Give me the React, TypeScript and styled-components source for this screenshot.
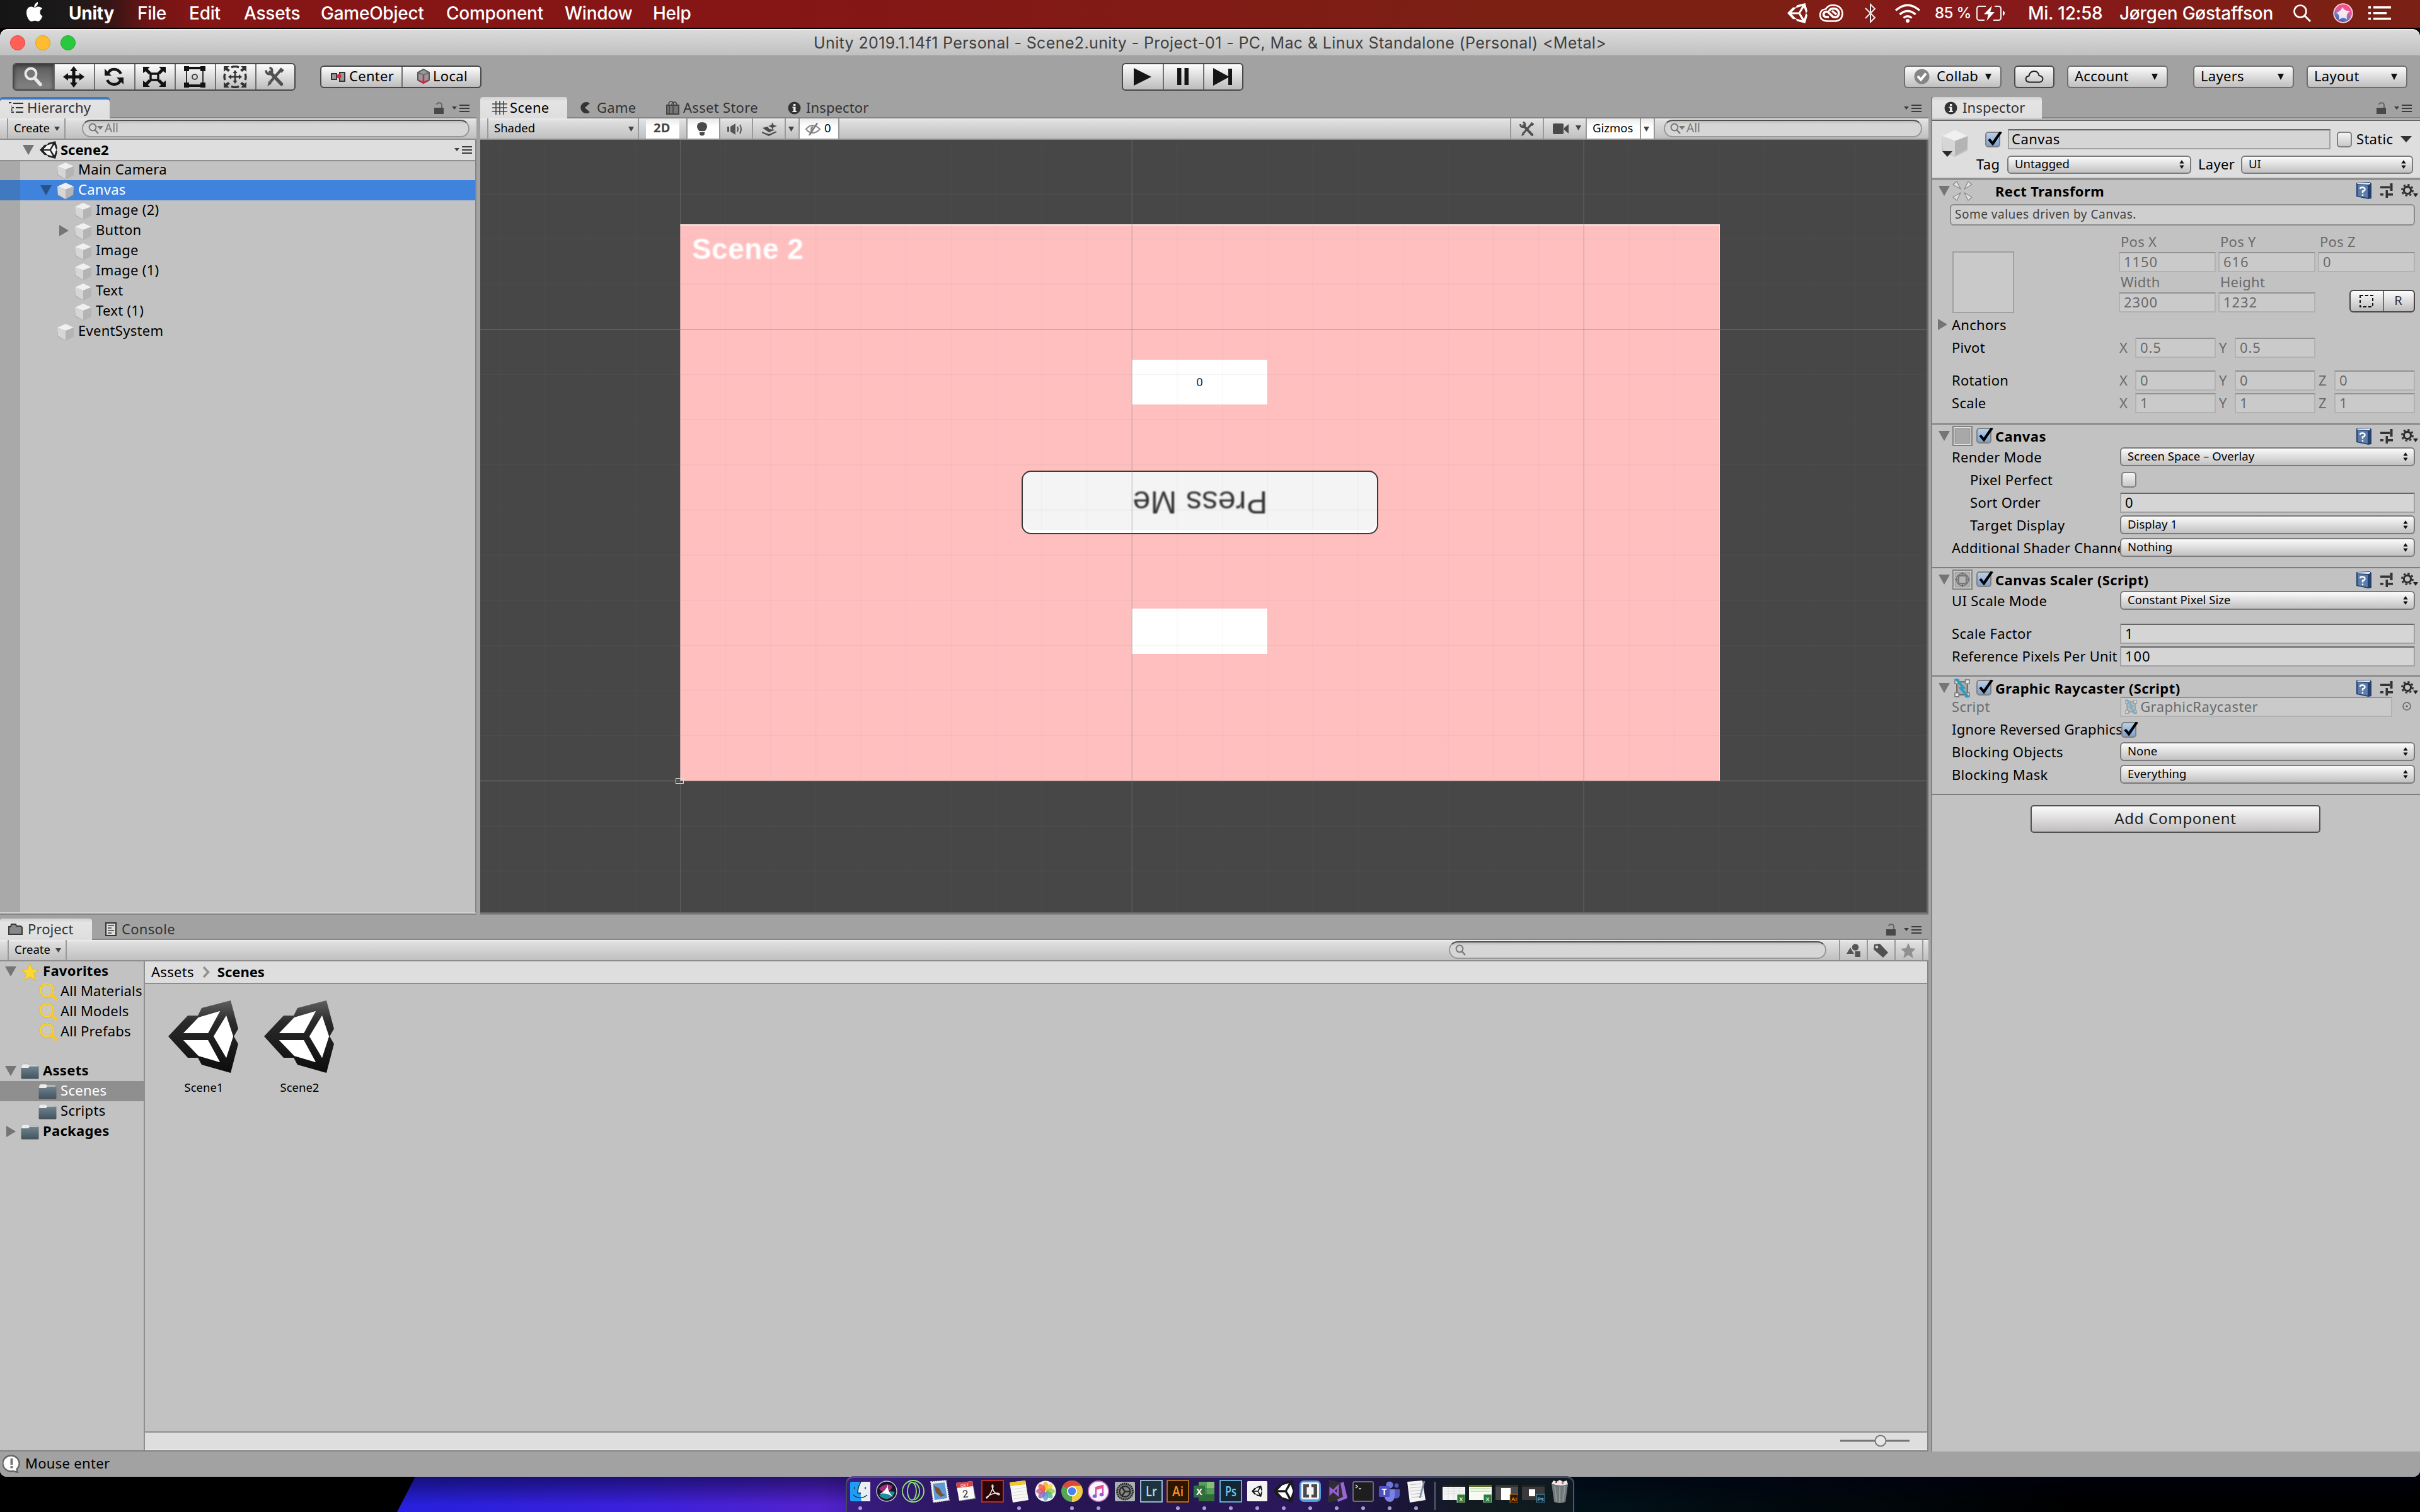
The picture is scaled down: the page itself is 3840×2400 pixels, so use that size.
import React from "react";
import styled, { createGlobalStyle, css } from "styled-components";

const UI = `"Noto Sans", "Open Sans", sans-serif`;
const MAC = `Inter, "Liberation Sans", sans-serif`;

const Global = createGlobalStyle`
  *, *::before, *::after { box-sizing: border-box; }
  html, body { margin: 0; padding: 0; background: #000; }
  body { width: 3840px; height: 2400px; overflow: hidden; font-family: ${UI}; font-size: 22px; color: #000; }
  svg { display: block; flex: none; }
`;

const Desktop = styled.div`
  width: 3840px; height: 2400px; display: flex; flex-direction: column; background: #000; overflow: hidden;
`;

/* ---------- text ---------- */
const Txt = styled.span<{ $b?: boolean; $s?: number; $c?: string; $ls?: number; $w?: number; $ml?: number; $up?: number }>`
  font-family: ${UI};
  font-size: ${p => p.$s ?? 22}px;
  font-weight: ${p => (p.$b ? 700 : 400)};
  letter-spacing: ${p => p.$ls ?? 0.3}px;
  color: ${p => p.$c ?? "#000"};
  line-height: 30px;
  padding-bottom: ${p => p.$up ?? 3}px;
  margin-left: ${p => p.$ml ?? 0}px;
  white-space: pre;
  flex: none;
  ${p => p.$w !== undefined && css`width: ${p.$w}px;`}
`;

/* ---------- menu bar ---------- */
const MenuBar = styled.header`
  height: 46px; flex: none; display: flex; align-items: center; padding: 0 46px 2px 42px;
  border-bottom: 2px solid #0a0000;
  background: linear-gradient(90deg, #151515 0, #1b1919 110px, #3a1515 180px, #721414 240px, #861616 320px, #861616 1200px, #7c2014 2400px, #7d2014 2800px, #861919 3050px, #861919 3300px, #7c2014 3700px, #7b2014 3840px);
`;
const MenuText = styled.span<{ $w: number; $bold?: boolean; $ml: number; $s?: number; $ls?: number }>`
  font-family: ${MAC}; color: #fff; font-size: ${p => p.$s ?? 28}px; line-height: 44px; white-space: pre;
  font-weight: ${p => (p.$bold ? 700 : 500)};
  letter-spacing: ${p => p.$ls ?? -0.25}px;
  width: ${p => p.$w}px; margin-left: ${p => p.$ml}px; flex: none;
`;
const MenuRight = styled.div`display: flex; align-items: center; margin-left: auto;`;
const Slot = styled.div<{ $ml?: number; $w?: number; $mt?: number }>`
  display: flex; flex: none; margin-left: ${p => p.$ml ?? 0}px; margin-top: ${p => p.$mt ?? 0}px;
  ${p => p.$w !== undefined && css`width: ${p.$w}px;`}
`;

/* ---------- window ---------- */
const TitleBar = styled.div`
  height: 43px; flex: none; display: flex; align-items: center; justify-content: center; padding-left: 16px;
  background: linear-gradient(#dadada, #c1c1c1); border-bottom: 2px solid #aaa; border-top: 2px solid #f0f0f0;
  border-radius: 12px 12px 0 0;
`;
const Lights = styled.div`display: flex; gap: 16px; width: 1275px; flex: none;`;
const Light = styled.i<{ $c: string; $e: string }>`
  width: 24px; height: 24px; border-radius: 50%; background: ${p => p.$c}; border: 1px solid ${p => p.$e};
`;
const Title = styled.span`
  font-family: ${MAC}; font-size: 25px; letter-spacing: 0.38px; color: #404040; line-height: 40px; white-space: pre; flex: 1; padding-top: 1px;
`;
const Window = styled.div`height: 2298px; flex: none; display: flex; flex-direction: column; background: #a2a2a2; border-radius: 12px 12px 10px 10px; overflow: hidden;`;

const MainBar = styled.div`height: 65px; flex: none; display: flex; align-items: center; padding: 0 20px;`;
const BarZone = styled.div<{ $w?: number; $right?: boolean }>`
  display: flex; align-items: center;
  ${p => p.$w && css`width: ${p.$w}px;`}
  ${p => p.$right && css`margin-left: auto;`}
`;
const Group = styled.div<{ $h: number; $ml?: number }>`
  display: flex; height: ${p => p.$h}px; margin-left: ${p => p.$ml ?? 0}px; overflow: hidden;
  border: 2px solid #484848; border-radius: 6px; background: linear-gradient(#fdfdfd, #bdbbbc);
`;
const Cell = styled.div<{ $w: number; $on?: boolean; $pl?: number }>`
  width: ${p => p.$w}px; display: flex; align-items: center; ${p => (p.$pl !== undefined ? `padding-left:${p.$pl}px;` : "justify-content:center; padding-right:2px;")}
  border-left: 2px solid #6e6e6e; flex: none;
  &:first-child { border-left: 0; }
  ${p => p.$on && css`background: linear-gradient(#5a5a5a, #868686); box-shadow: inset 0 2px 6px #333;`}
`;
const PushButton = styled.div<{ $w: number; $ml?: number; $strong?: boolean; $center?: boolean }>`
  width: ${p => p.$w}px; height: 36px; margin-left: ${p => p.$ml ?? 20}px; display: flex; align-items: center; flex: none;
  padding: 0 ${p => (p.$center ? 0 : 14)}px 0 ${p => (p.$center ? 0 : 10)}px;
  justify-content: ${p => (p.$center ? "center" : "space-between")};
  border: 2px solid ${p => (p.$strong ? "#484848" : "#6e6e6e")}; border-radius: 6px; background: linear-gradient(#fbfbfb, #c0bebf);
`;

const Main = styled.div`display: flex; height: 2150px; flex: none;`;
const LeftArea = styled.div`width: 3060px; display: flex; flex-direction: column; flex: none;`;
const TopRow = styled.div`display: flex; height: 1298px; flex: none; gap: 6px;`;
const Panel = styled.section<{ $w: number; $h?: string }>`
  width: ${p => p.$w}px; flex: none; display: flex; flex-direction: column; height: ${p => p.$h ?? "100%"};
  border-bottom: 2px solid #848484;
`;
const TabStrip = styled.div<{ $h?: number }>`
  height: ${p => p.$h ?? 34}px; flex: none; display: flex; align-items: flex-end; border-bottom: 2px solid #858585;
`;
const Tab = styled.div<{ $w: number; $on?: boolean; $focus?: boolean; $pl: number }>`
  width: ${p => p.$w}px; height: 34px; margin-bottom: -2px; padding-left: ${p => p.$pl}px; flex: none;
  display: flex; align-items: center; border-radius: 4px 4px 0 0;
  ${p => p.$on && css`background: linear-gradient(#d2d2d2, #e4e4e4 20%, #dedede);`}
  ${p => p.$focus && css`box-shadow: inset 0 4px 0 #3d78c2;`}
`;
const StripEnd = styled.div<{ $r: number }>`margin-left: auto; display: flex; gap: 13px; align-items: center; height: 34px; margin-bottom: -2px; padding: 1px ${p => p.$r}px 0 0;`;
const Bar = styled.div<{ $pl?: number }>`
  height: 34px; flex: none; display: flex; align-items: stretch; padding-left: ${p => p.$pl ?? 11}px;
  background: linear-gradient(#eee, #dedede 4px, #c0c0c0); border-bottom: 2px solid #8e8e8e;
`;
const BarItem = styled.div<{ $w: number; $on?: boolean; $pl?: number; $noL?: boolean; $last?: boolean }>`
  width: ${p => p.$w}px; flex: none; display: flex; align-items: center; padding-left: ${p => p.$pl ?? 0}px;
  border-left: ${p => (p.$noL ? 0 : 2)}px solid #999; padding-top: 1px;
  ${p => p.$last && css`border-right: 2px solid #999;`}
  ${p => p.$on && css`background: linear-gradient(#e9e9e9, #fff 40%);`}
`;
const Push = styled.div`margin-left: auto; display: flex;`;
const Search = styled.div<{ $w: number; $ml: number }>`
  width: ${p => p.$w}px; height: 28px; margin: 2px 0 0 ${p => p.$ml}px; flex: none; display: flex; align-items: center; padding-left: 8px;
  border: 2px solid #989898; border-top-color: #505050; border-radius: 14px; background: linear-gradient(#bcbcbc, #d6d6d6 5px);
`;

/* ---------- trees ---------- */
const HierBody = styled.div`
  flex: 1; display: flex; flex-direction: column; border-right: 2px solid #848484; border-bottom: 2px solid #d2d2d2;
  background: linear-gradient(90deg, #a9a9a9 32px, #c2c2c2 32px);
`;
const SceneRow = styled.div`
  height: 34px; flex: none; background: #dedede; border-bottom: 2px solid #909090; display: flex; align-items: center; padding: 0 5px 0 36px;
`;
const TreeRow = styled.div<{ $pl: number; $bg?: string; $mt?: number }>`
  height: 32px; margin-top: ${p => p.$mt ?? 0}px; flex: none; display: flex; align-items: center; padding-left: ${p => p.$pl}px; overflow: hidden;
  background: ${p => p.$bg ?? "transparent"};
`;

/* ---------- scene view ---------- */
const SceneView = styled.div`
  flex: 1; position: relative; overflow: hidden; background: #474747; border-right: 3px solid #686868; border-bottom: 2px solid #686868;
`;
const CanvasObj = styled.div<{ $x: number; $y: number; $w: number; $h: number }>`
  position: absolute; left: ${p => p.$x}px; top: ${p => p.$y}px; width: ${p => p.$w}px; height: ${p => p.$h}px;
  display: flex; align-items: center; justify-content: center;
`;
const PinkCanvas = styled(CanvasObj)`background: #ffbfbf; border-top: 2px solid #ffe4e4; border-right: 1px solid #ffe4e4;`;
const SceneLabel = styled(CanvasObj)`
  justify-content: flex-start; font: 700 46px/52px "Liberation Sans", Arial, sans-serif; letter-spacing: 0.5px; color: #fff; filter: blur(0.8px); white-space: pre;
`;
const WhiteBox = styled(CanvasObj)`background: #fff; font: 18px/20px "Liberation Sans", Arial, sans-serif; color: #222; padding-top: 1px;`;
const PressButton = styled(CanvasObj)`
  background: #f4f4f4; border: 2px solid #3a3a3a; border-radius: 15px; box-shadow: inset 0 -5px 0 #fff;
  font: 50px/58px "Liberation Sans", Arial, sans-serif; color: #333;
  span { transform: rotate(180deg); filter: blur(0.9px); white-space: pre; letter-spacing: 0.4px; padding-top: 2px; }
`;
const GridSvg = styled.svg`position: absolute; left: 0; top: 0;`;

/* ---------- project ---------- */
const ProjectBody = styled.div`flex: 1; display: flex; min-height: 0; border-right: 2px solid #848484;`;
const Folders = styled.div`width: 230px; flex: none; background: #c2c2c2; border-right: 2px solid #8e8e8e; display: flex; flex-direction: column;`;
const Assets = styled.div`flex: 1; background: #c2c2c2; display: flex; flex-direction: column;`;
const Crumbs = styled.div`height: 36px; background: #dedede; border-bottom: 2px solid #8e8e8e; display: flex; align-items: center; padding-left: 10px; flex: none;`;
const Thumbs = styled.div`flex: 1; display: flex; padding: 26px 0 0 16px;`;
const Thumb = styled.figure`width: 152px; margin: 0; display: flex; flex-direction: column; align-items: center;`;
const ThumbName = styled.figcaption`margin: 8px 0 0 3px; display: flex;`;
const ZoomBar = styled.div`height: 30px; flex: none; background: #dedede; border-top: 2px solid #8e8e8e; border-bottom: 2px solid #e8e8e8; display: flex; align-items: center; justify-content: flex-end; padding-right: 28px;`;
const StatusBar = styled.footer`height: 40px; flex: none; display: flex; align-items: center; padding-left: 4px; background: #a2a2a2; border-bottom: 1px solid #b4b4b4;`;

/* ---------- inspector ---------- */
const Inspector = styled.section`width: 774px; margin-left: 6px; background: #c2c2c2; display: flex; flex-direction: column; box-shadow: -2px 0 0 #848484;`;
const InspTabs = styled(TabStrip)`background: #a2a2a2;`;
const ObjHead = styled.div`
  height: 96px; flex: none; border-top: 2px solid #666; margin-top: 2px; border-bottom: 4px solid #929292; background: #dedede; display: flex; padding: 13px 10px 0 14px;
`;
const BigCube = styled.div`
  width: 46px; flex: none; position: relative;
  &::after { content: ""; position: absolute; left: 2px; top: 35px; border: 8px solid transparent; border-top: 9px solid #2a2a2a; border-bottom: 0; }
`;
const ObjLines = styled.div`display: flex; flex-direction: column; flex: 1;`;
const Line = styled.div<{ $h: number; $pl?: number; $mt?: number }>`height: ${p => p.$h}px; margin-top: ${p => p.$mt ?? 0}px; display: flex; align-items: center; padding-left: ${p => p.$pl ?? 0}px; flex: none;`;
const Field = styled.div<{ $w: number; $ml?: number; $dim?: boolean }>`
  width: ${p => p.$w}px; height: 32px; margin-left: ${p => p.$ml ?? 0}px; display: flex; align-items: center; padding-left: 6px; flex: none;
  background: ${p => (p.$dim ? "#cacaca" : "#d5d5d5")};
  border: 2px solid ${p => (p.$dim ? "#b2b2b2" : "#a2a2a2")}; border-top-color: ${p => (p.$dim ? "#929292" : "#666")};
`;
const Select = styled.div<{ $w: number; $ml?: number; $h?: number }>`
  width: ${p => p.$w}px; height: ${p => p.$h ?? 30}px; margin-left: ${p => p.$ml ?? 0}px; display: flex; align-items: center; justify-content: space-between; flex: none;
  padding: 0 9px 0 10px; border: 2px solid #7a7a7a; border-radius: 6px; background: linear-gradient(#fbfbfb, #c2c0c1);
`;
const Check = styled.div<{ $on?: boolean; $ml?: number }>`
  width: 24px; height: 25px; margin-left: ${p => p.$ml ?? 0}px; flex: none; border: 2px solid #808080; border-radius: 5px;
  background: ${p => (p.$on ? "linear-gradient(#b9cfe8, #7d9fce)" : "linear-gradient(#f4f4f4, #c8c8c8)")};
`;
const Section = styled.div<{ $h: number; $first?: boolean }>`
  height: ${p => p.$h}px; flex: none; display: flex; flex-direction: column; border-top: ${p => (p.$first ? 0 : 2)}px solid #7e7e7e;
`;
const SecHead = styled.div<{ $h?: number }>`height: ${p => p.$h ?? 36}px; flex: none; display: flex; align-items: center; padding: 0 0 0 10px;`;
const HeadInner = styled.div<{ $h: number }>`height: ${p => p.$h}px; display: flex; align-items: center; flex: 1; align-self: flex-start;`;
const HeadTools = styled.div`margin-left: auto; display: flex; align-items: center; gap: 13px; padding-right: 3px;`;
const Row = styled.div<{ $mb?: number; $pl?: number }>`
  height: 32px; margin-bottom: ${p => p.$mb ?? 4}px; padding-left: ${p => p.$pl ?? 31}px; flex: none; display: flex; align-items: flex-start;
`;
const HelpBox = styled.div`
  height: 34px; margin: 2px 8px 10px 28px; border: 2px solid #8c8c8c; border-radius: 6px; background: #cfcfcf; display: flex; align-items: center; padding-left: 6px; flex: none;
`;
const RectGrid = styled.div`display: flex; padding-left: 32px; height: 132px; flex: none;`;
const AnchorBox = styled.div`width: 98px; height: 98px; margin-top: 31px; background: #c9c9c9; border: 2px solid #a0a0a0;`;
const FieldGrid = styled.div`margin-left: 166px; display: grid; grid-template-columns: repeat(3, 154px); column-gap: 4px; grid-auto-rows: 32px; align-items: start;`;
const Axis = styled.div`width: 158px; display: flex; flex: none;`;
const AddRow = styled.div`border-top: 2px solid #7e7e7e; padding-top: 16px; display: flex; justify-content: center; padding-right: 2px;`;
const AddButton = styled.div`
  width: 460px; height: 44px; border: 2px solid #505050; border-radius: 5px; background: linear-gradient(#fbfbfb, #bfbdbe); display: flex; align-items: center; justify-content: center;
`;

/* ---------- dock ---------- */
const Wallpaper = styled.div`
  height: 56px; flex: none; display: flex; padding-left: 1342px; position: relative;
  &::before {
    content: ""; position: absolute; left: 630px; top: 0; right: 0; bottom: 0;
    clip-path: polygon(29px 0, 100% 0, 100% 100%, 0 100%);
    background: linear-gradient(rgba(0,0,20,.5), rgba(0,0,20,0) 80%),
      linear-gradient(90deg, #2620dc 0, #3a20dc 370px, #5222cc 670px, #2c148a 870px, #1a0c50 1570px, #02141c 1790px, #010c12 2070px, #000 2670px);
  }
`;
const Dock = styled.div`
  width: 1156px; height: 60px; margin-top: -1px; border: 2px solid rgba(120,120,150,.5); border-top-width: 3px; border-radius: 12px 12px 0 0; display: flex; position: relative;
  background: linear-gradient(90deg, #3a1c84, #2c1760 14%, #25154f 40%, #2a185c 62%, #1a1538 76%, #111b20 86%, #0e1a20);
`;
const DockItem = styled.div`width: 42px; display: flex; flex-direction: column; align-items: center; padding-top: 3px; flex: none; gap: 6px;`;
const Dot = styled.i`width: 6px; height: 6px; border-radius: 50%; background: #a99bd8;`;
const DockSep = styled.div`width: 18px; display: flex; justify-content: center; padding-top: 6px; flex: none; &::after { content: ""; width: 2px; height: 45px; background: #5a6070; }`;

/* ---------- icons ---------- */
const CubeLogo = ({ w, h, o, i, grad }: { w: number; h: number; o: string; i: string; grad?: boolean }) => (
  <svg width={w} height={h} viewBox="0 0 111 115" preserveAspectRatio="none">
    {grad && <defs><linearGradient id="ug" x1="0" y1="0" x2="0" y2="1"><stop offset="0" stopColor="#606060" /><stop offset=".3" stopColor="#2a2a2a" /><stop offset="1" stopColor="#0c0c0c" /></linearGradient></defs>}
    <path fillRule="evenodd" fill={grad ? "url(#ug)" : o} d="M0 57L31 24H47L53 12L99 0L111 45L104 57L111 69L99 115L53 102L47 91H31ZM24 52H63L82 17L48 27ZM24 63L48 88L82 98L63 63ZM92 24L72 57L92 91L103 57Z" />
    {i !== "none" && <path fill={i} d="M24 52H63L82 17L48 27ZM24 63L48 88L82 98L63 63ZM92 24L72 57L92 91L103 57Z" />}
  </svg>
);
const Fold = ({ open, c = "#757575" }: { open?: boolean; c?: string }) => (
  <svg width="18" height="18" viewBox="0 0 18 18"><path fill={c} d={open ? "M0 1H18L9 17Z" : "M2 0L17 9L2 18Z"} /></svg>
);
const Down = ({ w = 10, h = 10, c = "#111" }: { w?: number; h?: number; c?: string }) => (
  <svg width={w} height={h} viewBox="0 0 10 10" preserveAspectRatio="none"><path fill={c} d="M0 0H10L5 10Z" /></svg>
);
const UpDown = () => <svg width="8" height="16" viewBox="0 0 8 16"><path d="M4 1L7.6 6.500H.4ZM4 15L.4 9.500H7.6Z" fill="#111" /></svg>;
const GameCube = ({ s = 28 }: { s?: number }) => (
  <svg width={s} height={s} viewBox="0 0 28 28">
    <path d="M14 1L27 7V21L14 27.5L1 21V7Z" fill="#999" opacity=".35" transform="translate(0 .6)" />
    <path d="M14 1L27 7L14 12L1 7Z" fill="#f0f0f0" /><path d="M1 7L14 12V27L2 20Z" fill="#d6d6d6" /><path d="M27 7L14 12V27L26 20Z" fill="#b4b4b4" />
  </svg>
);
const Lock = () => <svg width="15" height="19" viewBox="0 0 15 19"><path d="M0 9H15V19H0Z" fill="#484848" /><path d="M4 4Q4 1.2 8 1.2Q12 1.2 12 5V9" fill="none" stroke="#666" strokeWidth="2" /></svg>;
const PaneMenu = () => <svg width="28" height="12" viewBox="0 0 28 12"><path d="M0 3H8L4 8ZM12 0H28V2H12ZM12 5H28V7H12ZM12 10H28V12H12Z" fill="#3c3c3c" /></svg>;
const ListIcon = () => <svg width="23" height="18" viewBox="0 0 23 18"><path d="M0 0H4V2H0ZM7 1H23V3H7ZM4 4V16H6M4 8H8V10H4ZM11 8H23V10H11ZM4 15H8V17H4ZM11 15H23V17H11Z" fill="#333" /></svg>;
const Hash = () => <svg width="24" height="22" viewBox="0 0 24 22"><path d="M6 0V22M12 0V22M18 0V22M0 5H24M0 11H24M0 17H24" stroke="#444" strokeWidth="1.6" /></svg>;
const Pac = () => <svg width="18" height="18" viewBox="0 0 18 18"><path d="M16 2A9 9 0 1 0 16 16L8 9Z" fill="#333" /></svg>;
const Bag = () => <svg width="21" height="22" viewBox="0 0 21 22"><path d="M1 7H20V21H1Z" fill="#777" stroke="#444" strokeWidth="2" /><path d="M4 7Q4 1 8 1Q12 1 12 7M9 7Q9 2 13 2Q17 2 17 7M11 8V21M5 8V21" fill="none" stroke="#444" strokeWidth="1.6" /></svg>;
const Info = () => <svg width="21" height="21" viewBox="0 0 21 21"><circle cx="10.5" cy="10.5" r="10" fill="#333" /><path d="M9 4H12.4V7H9ZM7.5 8.5H12.5V15H14V17H7.5V15H9V10.5H7.5Z" fill="#eee" /></svg>;
const Mag = ({ c = "#777", s = 20, arrow = true }: { c?: string; s?: number; arrow?: boolean }) => (
  <svg width={s + (arrow ? 6 : 0)} height={s} viewBox={`0 0 ${arrow ? 26 : 20} 20`}><circle cx="7" cy="8" r="5.4" fill="none" stroke={c} strokeWidth="2" /><path d="M10.5 12L16 18" stroke={c} strokeWidth="2.4" />{arrow && <path d="M14 6H24L19 12Z" fill={c} />}</svg>
);
const Wrench = ({ s = 34, c = "#505050" }: { s?: number; c?: string }) => (
  <svg width={s} height={s} viewBox="0 0 32 32"><g fill="none" stroke={c}><path d="M9 9L26 27" strokeWidth="5" strokeLinecap="round" /><path d="M3 6Q3 12 8 12Q12 12 12 7Q12 3 8 2.5" strokeWidth="3.4" /><path d="M24 7L9 24" strokeWidth="4" /></g><path d="M25 2L30 6L26 10L22 6ZM5 30L7 22L11 26Z" fill={c} /></svg>
);
const Hand = () => <svg width="34" height="34" viewBox="0 0 34 34"><circle cx="13" cy="12" r="8.5" fill="#777" stroke="#e8e8e8" strokeWidth="4" /><path d="M19 19L28 29" stroke="#e8e8e8" strokeWidth="5.5" strokeLinecap="round" /></svg>;
const Move = () => <svg width="34" height="34" viewBox="0 0 34 34"><path d="M17 0L23 8H19.5V14.5H26V11L34 17L26 23V19.5H19.5V26H23L17 34L11 26H14.5V19.5H8V23L0 17L8 11V14.5H14.5V8H11Z" fill="#111" /></svg>;
const Rotate = () => <svg width="34" height="32" viewBox="0 0 34 32"><g fill="none" stroke="#151515" strokeWidth="4.400"><path d="M7 11Q10 4 17 4Q24 4 28 11" /><path d="M6 21Q10 28 17 28Q25 28 28 20" /></g><path d="M2 3V14H13ZM32 28V17H21Z" fill="#151515" /></svg>;
const Scale = () => <svg width="36" height="32" viewBox="0 0 36 32"><path d="M12 11H24V21H12Z" fill="none" stroke="#111" strokeWidth="3.4" /><path d="M0 0H11L7.500 3.500L13 9L9 12L4 7L0 10ZM36 0H25L28.500 3.500L23 9L27 12L32 7L36 10ZM0 32H11L7.500 28.500L13 23L9 20L4 25L0 22ZM36 32H25L28.500 28.500L23 23L27 20L32 25L36 22Z" fill="#111" /></svg>;
const RectTool = () => <svg width="34" height="34" viewBox="0 0 34 34"><path d="M4 4H30V30H4Z" fill="none" stroke="#333" strokeWidth="2" /><path d="M0 0H8V8H0ZM26 0H34V8H26ZM0 26H8V34H0ZM26 26H34V34H26ZM8 1H26V5H8ZM8 29H26V33H8Z" fill="#111" /><circle cx="17" cy="17" r="4" fill="none" stroke="#444" strokeWidth="2" /></svg>;
const Multi = () => <svg width="38" height="36" viewBox="0 0 38 36"><g fill="none" stroke="#333" strokeWidth="3.4"><path d="M13 3Q19 0 25 3M13 33Q19 36 25 33M3 13Q1 18 3 23M35 13Q37 18 35 23" /></g><path d="M1 1H10L7 4L11 7L8 10L4 7L1 10ZM37 1H28L31 4L27 7L30 10L34 7L37 10ZM1 35H10L7 32L11 29L8 26L4 29L1 26ZM37 35H28L31 32L27 29L30 26L34 29L37 26Z" fill="#333" /><path d="M19 7L22.500 12H20.300V16.700H25V14L30 18L25 22V19.300H20.300V24H22.500L19 29L15.500 24H17.700V19.300H13V22L8 18L13 14V16.700H17.700V12H15.500Z" fill="#333" /></svg>;
const PivotIcon = () => <svg width="24" height="16" viewBox="0 0 24 16"><path d="M1 3H9V12H1ZM14 1H22V15H14Z" fill="#999" stroke="#333" strokeWidth="2" /><circle cx="13" cy="7" r="3.6" fill="#d8283c" /></svg>;
const LocalIcon = () => <svg width="22" height="25" viewBox="0 0 22 25"><path d="M2 6L11 1L20 6V18L11 23L2 18Z" fill="#999" stroke="#555" strokeWidth="2" /><path d="M2 6L11 10L20 6M11 10V14" stroke="#666" strokeWidth="1.600" fill="none" /><path d="M11 11V22M4 19L11 22L18 19" stroke="#d02840" strokeWidth="2.600" fill="none" /></svg>;
const PlayIcon = () => <svg width="30" height="28" viewBox="0 0 30 28"><path d="M1 0L29 14L1 28Z" fill="#151515" /></svg>;
const PauseIcon = () => <svg width="18" height="27" viewBox="0 0 18 27"><path d="M0 0H6.500V27H0ZM11.500 0H18V27H11.500Z" fill="#151515" /></svg>;
const StepIcon = () => <svg width="31" height="28" viewBox="0 0 31 28"><path d="M0 0L24 13V1H30V27H24V15L0 28Z" fill="#151515" /></svg>;
const CollabCheck = () => <svg width="25" height="25" viewBox="0 0 25 25"><circle cx="12.500" cy="12.500" r="12" fill="#858585" /><path d="M6 12L11 17.500L19 7.500" fill="none" stroke="#fff" strokeWidth="4" /></svg>;
const Cloud = () => <svg width="30" height="21" viewBox="0 0 30 21"><path d="M7 19.500Q1.500 19 1.500 14Q2 10 6.500 9.500Q8 2 15 2Q21 2 22.500 9Q28.500 10 28.500 14.500Q28 19 23 19.500Z" fill="none" stroke="#222" strokeWidth="2" /></svg>;
const Bulb = () => <svg width="16" height="22" viewBox="0 0 16 22"><path d="M8 0Q16 0 16 7Q16 10 12.500 14H3.500Q0 10 0 7Q0 0 8 0ZM4 15.500H12V18Q12 21 8 21.500Q4 21 4 18Z" fill="#4a4a4a" /></svg>;
const Speaker = () => <svg width="26" height="20" viewBox="0 0 26 20"><path d="M0 6H3V14H0ZM5 6L13 1V19L5 14Z" fill="#555" /><path d="M16 6Q18 10 16 14M20 3Q24 10 20 17" fill="none" stroke="#555" strokeWidth="2" /></svg>;
const Fx = () => <svg width="26" height="22" viewBox="0 0 26 22"><path d="M18 0L19.500 4.500L25 6L19.500 8L18 12L16 8L11 6L16 4.500ZM2 9L10 7L13 11L22 12L12 16ZM1 15L12 19L24 14V16L12 22L1 17Z" fill="#4a4a4a" /></svg>;
const EyeOff = () => <svg width="24" height="20" viewBox="0 0 24 20"><path d="M1 10Q11 -2 23 10Q11 22 1 10Z" fill="none" stroke="#888" strokeWidth="2" /><path d="M8 10Q8 5 13 5L9 15Q8 13 8 10Z" fill="#888" /><path d="M19 0L6 20" stroke="#777" strokeWidth="2.400" /></svg>;
const Camera = () => <svg width="26" height="17" viewBox="0 0 26 17"><rect width="17" height="17" rx="2" fill="#4a4a4a" /><path d="M18 7L25 1V16L18 10Z" fill="#4a4a4a" /></svg>;
const FolderTab = () => <svg width="23" height="18" viewBox="0 0 23 18"><path d="M1 5H4L5 1H12L13 4H20L22 6V17H1Z" fill="#888" stroke="#3a3a3a" strokeWidth="2" /></svg>;
const ConsoleIcon = () => <svg width="18" height="22" viewBox="0 0 18 22"><path d="M1 1H17V21H1Z" fill="#ddd" stroke="#333" strokeWidth="2" /><path d="M4 5H14M4 9H10M4 13H14M4 17H10" stroke="#666" strokeWidth="1.800" /></svg>;
const Star = ({ s = 29, c = "#fdd835" }: { s?: number; c?: string }) => <svg width={s} height={s} viewBox="0 0 28 28"><path d="M14 1L17.800 10L27 10.800L20 17L22.300 27L14 21.500L5.700 27L8 17L1 10.800L10.200 10Z" fill={c} stroke={s > 25 ? "#e2b92c" : c} /></svg>;
const YellowMag = () => <svg width="29" height="28" viewBox="0 0 29 28"><circle cx="12.500" cy="11.500" r="10.300" fill="#e6dcae" fillOpacity=".25" stroke="#dcae1c" strokeWidth="3.200" /><circle cx="12.500" cy="11.500" r="10.300" fill="none" stroke="#fed83a" strokeWidth="2" /><path d="M20 19L26.500 26" stroke="#f8c828" strokeWidth="4.600" strokeLinecap="round" /></svg>;
const Folder = () => <svg width="29" height="25" viewBox="0 0 29 25"><defs><linearGradient id="fo" x1="0" y1="0" x2="0" y2="1"><stop offset="0" stopColor="#6f8490" /><stop offset="1" stopColor="#43525b" /></linearGradient></defs><path d="M1 4Q2 1 4 1H11Q13 1 13.500 3H27V8H1Z" fill="#ebebeb" stroke="#aaa" strokeWidth=".6" /><path d="M.5 7H12L14 4.500H28.500V23Q28.500 24.500 27 24.500H2Q.5 24.500 .5 23Z" fill="url(#fo)" /></svg>;
const Chevron = () => <svg width="12" height="18" viewBox="0 0 12 18"><path d="M2 1L9.500 9L2 17" fill="none" stroke="#909090" strokeWidth="3.400" /></svg>;
const Shapes = () => <svg width="23" height="21" viewBox="0 0 23 21"><circle cx="14" cy="5.500" r="5.300" fill="#555" /><path d="M6 6L12 16H0ZM13.500 12H22V21H13.500Z" fill="#555" /></svg>;
const Tag = () => <svg width="23" height="22" viewBox="0 0 23 22"><path fillRule="evenodd" d="M1 1L10 0L23 14L15 22L0 9ZM5 3A2.300 2.300 0 1 0 5.100 7.600A2.300 2.300 0 1 0 5 3Z" fill="#505050" /></svg>;
const Book = () => <svg width="26" height="27" viewBox="0 0 26 27"><path d="M1 1L22 0L25 2V26L20 27L1 23Z" fill="#24406e" /><path d="M3 4L19 5.500V25L3 22Z" fill="#5c7eac" /><path d="M3 1.500L23 1V3L20 4L2 3Z" fill="#e8eef5" /><path d="M7 11Q7 8 11 8.500Q15 9 14.500 12Q14 14 11 14.500V17.500M11 19.500V22" fill="none" stroke="#fff" strokeWidth="2.400" /></svg>;
const Presets = () => <svg width="20" height="23" viewBox="0 0 20 23"><path d="M0 4.500H13V8H0ZM15.500 0H19.500V12H15.500ZM13 8H16V4.500H13ZM0 16H5V19.500H0ZM8.500 11H12V23H8.500ZM12 16H20V19.500H12Z" fill="#333" /></svg>;
const Gear = () => <svg width="27" height="22" viewBox="0 0 27 22"><circle cx="10" cy="10" r="5.600" fill="none" stroke="#2c2c2c" strokeWidth="3.200" /><circle cx="10" cy="10" r="8.600" fill="none" stroke="#2c2c2c" strokeWidth="2.600" strokeDasharray="3.380 3.380" /><path d="M19 15H27L23 21Z" fill="#222" /></svg>;
const RectXf = () => <svg width="32" height="32" viewBox="0 0 32 32"><path d="M1 6L7 1L13 13ZM31 6L25 1L19 13ZM1 26L7 31L13 19ZM31 26L25 31L19 19Z" fill="#e2e2e2" stroke="#888" strokeWidth="1.200" /></svg>;
const CanvasIcon = ({ scaler }: { scaler?: boolean }) => <svg width="32" height="32" viewBox="0 0 32 32"><path d="M1 1H31V31H1Z" fill="#e4e4e4" stroke="#808080" strokeWidth="2" /><path d="M4 4H28V28H4Z" fill={scaler ? "#b4b4b4" : "#a8a8a8"} stroke="#8a8a8a" />{scaler && <g fill="none" stroke="#777" strokeWidth="2"><circle cx="16" cy="16" r="9.500" /><path d="M10 10H22V22H10ZM4 16H10M22 16H28M16 4V10M16 22V28" /></g>}</svg>;
const RayIcon = ({ s = 30, o = 1 }: { s?: number; o?: number }) => <svg width={s * 0.8} height={s} viewBox="0 0 24 30" opacity={o}><path d="M4 5H20V25H4Z" fill="#aaa" stroke="#666" strokeWidth="2" /><path d="M1 2H7V8H1ZM17 2H23V8H17ZM1 22H7V28H1ZM17 22H23V28H17Z" fill="#eee" stroke="#777" strokeWidth="1.600" /><path d="M2 0L14 14L10 15L22 29" fill="none" stroke="#2b9cc4" strokeWidth="4" /></svg>;
const Tick = () => <svg width="26" height="27" viewBox="0 0 26 27"><path d="M4 12L10 19L23 0" fill="none" stroke="#000" strokeWidth="4.200" /></svg>;
const Bubble = () => <svg width="31" height="29" viewBox="0 0 31 29"><path d="M14.500 1.500A13 12.500 0 1 0 17 26L24 28L22.500 23A13 12.500 0 0 0 14.500 1.500Z" fill="#fff" stroke="#666" strokeWidth="2.400" /><path d="M12.500 6H16.500V16H12.500ZM12.500 18H16.500V21.500H12.500Z" fill="#777" /></svg>;

const Apple = () => <svg width="26" height="32" viewBox="0 0 26 32"><path d="M18 0Q18.500 4 16 6.500Q14 8.500 12 8.500Q12 5 14 3Q15.500 1 18 0ZM21.500 16.500Q21.500 12.500 25 10.500Q22.500 7.500 18.500 7.500C16 7.500 14.500 9 13 9C11.500 9 9.500 7.500 7.500 7.500C3 7.500 0 11.500 0 17C0 23 4 31 8 31C10 31 11 29.800 13.200 29.800C15.500 29.800 16.200 31 18.300 31C21.500 31 24.500 25.500 25.500 22.500Q21.500 20.500 21.500 16.500Z" fill="#fff" /></svg>;
const CC = () => <svg width="38" height="28" viewBox="0 0 38 28"><path d="M12 26.500Q1 26 1 16Q2 8 10 7.500Q14 1 22 1Q35 2 36.500 13Q37 25 26 26.500Z" fill="none" stroke="#fff" strokeWidth="2.600" /><g fill="none" stroke="#fff" strokeWidth="3.600"><path d="M15 20Q6.500 21 6.500 15.500Q8 10 13.500 12L22 20Q30 22 31 14Q30 6.500 22 6.500Q16 7 15.500 11" /><path d="M20 10L27 16" /></g></svg>;
const BT = () => <svg width="20" height="32" viewBox="0 0 20 32"><path d="M2 8L17 23L10 30V2L17 9L2 24" fill="none" stroke="#eee" strokeWidth="2" /></svg>;
const Wifi = () => <svg width="42" height="30" viewBox="0 0 42 30"><g fill="none" stroke="#fff" strokeWidth="3.400"><path d="M2 10.500Q21 -6 40 10.500" /><path d="M8.500 17Q21 6 33.500 17" /><path d="M14.500 22.500Q21 17 27.500 22.500" /></g><circle cx="21" cy="27" r="3" fill="#fff" /></svg>;
const Batt = () => <svg width="46" height="24" viewBox="0 0 46 24"><path d="M15 1H5Q1 1 1 5V19Q1 23 5 23H13M29 1H35Q39 1 39 5V19Q39 23 35 23H27" fill="none" stroke="#eee" strokeWidth="2" /><path d="M42 8Q45 9 45 12Q45 15 42 16ZM25 0L12 13.500H19L16.500 24L29 10H22Z" fill="#fff" /></svg>;
const Siri = () => <svg width="32" height="32" viewBox="0 0 32 32"><defs><linearGradient id="si" x1=".7" y1="0" x2=".3" y2="1"><stop offset="0" stopColor="#ff4a80" /><stop offset=".45" stopColor="#d860a0" /><stop offset=".7" stopColor="#5a80c8" /><stop offset="1" stopColor="#6a3a90" /></linearGradient></defs><circle cx="16" cy="16" r="14.800" fill="url(#si)" stroke="#ffd0dc" strokeWidth="1.800" /><path d="M5 15Q12 14 15 6Q17 12 27 13Q20 16 22 26Q17 20 9 27Q12 18 5 15Z" fill="#fff" opacity=".85" /></svg>;
const NotifList = () => <svg width="36" height="22" viewBox="0 0 36 22"><path d="M0 0H4V3.500H0ZM8 0H36V3.500H8ZM0 9H4V12.500H0ZM8 9H29V12.500H8ZM0 18H4V21.500H0ZM8 18H36V21.500H8Z" fill="#fff" /></svg>;

const AppTile = ({ t, bg, fg, bd }: { t: string; bg: string; fg: string; bd: string }) => (
  <svg width="36" height="36" viewBox="0 0 36 36"><rect x="1" y="1" width="34" height="34" fill={bg} stroke={bd} strokeWidth="1.600" /><text x="18" y="25.500" textAnchor="middle" fontFamily="Open Sans, sans-serif" fontSize="21" fontWeight="600" textLength="18" lengthAdjust="spacingAndGlyphs" fill={fg}>{t}</text></svg>
);
const S = ({ children }: { children: React.ReactNode }) => <svg width="36" height="36" viewBox="0 0 36 36">{children}</svg>;
const petals = ["#f5a623", "#f8d32b", "#9ccb3b", "#4fb58a", "#5b9bd5", "#8a6bc0", "#d0598f", "#ee5a3a"];

const dockApps: { k: string; on?: boolean; el: React.ReactNode }[] = [
  { k: "finder", on: true, el: <S><rect x="2" y="3" width="32" height="31" rx="2" fill="#1e9df4" /><path d="M19 3H34V34H20Q18 28 19 21H14Q15 10 19 3Z" fill="#e8eef4" /><path d="M9 11V15M26 11V15M7 24Q18 33 29 24M19 3Q14 12 14 21H19" fill="none" stroke="#17324d" strokeWidth="1.500" /></S> },
  { k: "siri", el: <S><circle cx="18" cy="18" r="16" fill="#17152c" stroke="#c8c8d0" strokeWidth="1.400" /><path d="M6 14Q14 4 26 9Q28 16 18 19Q12 22 6 14Z" fill="#c83488" opacity=".8" /><path d="M6 24Q18 16 31 19Q26 31 18 30Q10 30 6 24Z" fill="#28b4c0" opacity=".75" /><path d="M7 22Q17 18 20 7Q18 17 28 27Q18 20 7 22Z" fill="#fff" /></S> },
  { k: "opera", el: <S><g fill="none" stroke="#93e678" strokeWidth="1.800"><circle cx="18" cy="18" r="17" /><ellipse cx="16" cy="18" rx="7" ry="14" /><path d="M20 4Q28 8 28 18Q28 28 20 32" /></g></S> },
  { k: "mail", el: <S><path d="M4 3L28 1L33 32L8 36Z" fill="#f4f4f4" stroke="#ddd" strokeDasharray="2 1.400" strokeWidth="1.600" /><path d="M7 6L26 4L30 29L10 32Z" fill="#5f9ad8" /><path d="M9 9L18 14L22 22L27 24L20 27L12 20Z" fill="#7a5230" /></S> },
  { k: "calendar", el: <S><path d="M2 5L27 2L34 30L8 34Z" fill="#666" /><path d="M2 5L28 2L32 29L7 33Z" fill="#f8f8f8" /><path d="M2 5L28 2L29 10L3 13Z" fill="#d84040" /><text x="9" y="11" fontSize="6.500" fontFamily="Inter, sans-serif" fill="#fff" transform="rotate(-6 15 9)">OKT</text><text x="12" y="28" fontSize="16" fontFamily="Inter, sans-serif" fill="#222" transform="rotate(-6 16 24)">2</text></S> },
  { k: "acrobat", el: <S><rect x="1" y="1" width="34" height="34" fill="#2b0508" stroke="#c8301e" strokeWidth="1.800" /><path d="M18 8Q16 8 18 14Q20 21 28 24Q31 22 26 21Q17 21 9 27Q7 29 9 29Q14 24 18.500 13Q19.500 8 18 8Z" fill="none" stroke="#eee" strokeWidth="1.500" /></S> },
  { k: "notes", on: true, el: <S><path d="M3 4L28 1L33 32L8 36Z" fill="#f7f7f5" /><path d="M3 4L28 1L29 7L4 10Z" fill="#f2c62c" /><path d="M6 15L29 12M7 20L30 17M8 25L31 22M9 30L32 27" stroke="#ddd" /></S> },
  { k: "photos", el: <S><circle cx="18" cy="18" r="16.500" fill="#f6f6f6" />{petals.map((c, i) => <ellipse key={c} cx="18" cy="10" rx="4.400" ry="7" fill={c} opacity=".82" transform={`rotate(${i * 45} 18 18)`} />)}</S> },
  { k: "chrome", on: true, el: <S><circle cx="18" cy="18" r="17" fill="#5aa552" /><path d="M18 18L3.300 9.500A17 17 0 0 1 32.700 9.500Z" fill="#d94a3c" /><path d="M18 18L32.700 9.500A17 17 0 0 1 18 35Z" fill="#f0cc42" /><path d="M18 9.500H32.700L30 16Z" fill="#f0cc42" /><circle cx="18" cy="18" r="8" fill="#fff" /><circle cx="18" cy="18" r="6.300" fill="#4b83ec" /></S> },
  { k: "itunes", on: true, el: <S><circle cx="18" cy="18" r="16" fill="#f8f8fc" stroke="#d070c8" strokeWidth="1.800" /><path d="M14 26V12L25 9V23" fill="none" stroke="#cc4cb0" strokeWidth="2.200" /><path d="M14 12L25 9V13L14 16Z" fill="#e8508c" /><ellipse cx="12" cy="26" rx="3.400" ry="2.800" fill="#7a62e0" /><ellipse cx="23" cy="23.500" rx="3.400" ry="2.800" fill="#9a58d8" /></S> },
  { k: "settings", el: <S><rect x="2" y="3" width="32" height="31" rx="2" fill="#a8b0b4" /><circle cx="18" cy="18.500" r="12.500" fill="#888" stroke="#222" strokeWidth="3" strokeDasharray="2 1" /><circle cx="18" cy="18.500" r="8.500" fill="none" stroke="#2a2a2a" strokeWidth="2.400" /><path d="M18 18.500L27 18.500M18 18.500L13 11M18 18.500L13 26" stroke="#2a2a2a" strokeWidth="2.400" /></S> },
  { k: "lr", el: <AppTile t="Lr" bg="#1d3340" fg="#b4dcec" bd="#b4dcec" /> },
  { k: "ai", on: true, el: <AppTile t="Ai" bg="#2c1600" fg="#f29220" bd="#d0801c" /> },
  { k: "excel", on: true, el: <S><rect x="9" y="3" width="25" height="31" rx="2" fill="#3f8a48" /><path d="M22 3H34V13H22Z" fill="#86c078" /><path d="M9 3H22V13H9Z" fill="#569e58" /><path d="M22 13H34V23H22Z" fill="#569e58" /><path d="M9 23H34V34H9Z" fill="#2f6a38" /><rect x="1" y="9" width="18" height="19" rx="1.500" fill="#2f7040" /><text x="10" y="24" textAnchor="middle" fontFamily="Open Sans, sans-serif" fontWeight="700" fontSize="14" fill="#fff">X</text></S> },
  { k: "ps", on: true, el: <AppTile t="Ps" bg="#142634" fg="#6cc4ee" bd="#7accee" /> },
  { k: "hub", on: true, el: <S><rect x="2" y="2" width="32" height="32" rx="1.500" fill="#f4f4f4" /><g transform="translate(9 9)"><CubeLogo w={17} h={18} o="#111" i="none" /></g></S> },
  { k: "unity", on: true, el: <CubeLogo w={34} h={36} o="#1a1a1a" i="#fff" /> },
  { k: "brackets", on: true, el: <S><rect x="1" y="1" width="34" height="34" rx="7" fill="#559ade" /><rect x="4" y="4" width="28" height="27" rx="3" fill="#f4f4f4" /><path d="M7 7H16V11.500H12.500V23.500H16V28H7ZM29 7H20V11.500H23.500V23.500H20V28H29Z" fill="#4a4a4a" /></S> },
  { k: "vs", on: true, el: <S><path d="M6 0L26 4L30 30L4 36Z" fill="#2e2e32" /><path d="M24 5L29 3L35 29L20 35L19 31L28 27Z" fill="#9a66d4" /><path d="M8 14L20 24V10L8 22Z" fill="none" stroke="#9a5fd0" strokeWidth="3" /></S> },
  { k: "term", on: true, el: <S><rect x="2" y="3" width="32" height="31" rx="2" fill="#1e1e1e" stroke="#8a8a92" strokeWidth="1.400" /><path d="M6 8L9 10.500L6 13M11 14H15" fill="none" stroke="#eee" strokeWidth="1.400" /></S> },
  { k: "teams", on: true, el: <S><circle cx="18" cy="8" r="5.600" fill="#7078d8" /><circle cx="29" cy="9" r="3.400" fill="#525ac0" /><path d="M24 15H34V25Q32 31 25 29Z" fill="#525ac0" /><path d="M10 15H26V26Q25 35 18 35Q11 34 10 27Z" fill="#7a82e4" /><rect x="1" y="10" width="17" height="17" rx="1.500" fill="#4b53bc" /><text x="9.500" y="24" textAnchor="middle" fontFamily="Open Sans, sans-serif" fontWeight="700" fontSize="14" fill="#fff">T</text></S> },
  { k: "textedit", on: true, el: <S><path d="M4 3L28 1L33 32L8 36Z" fill="#f4f4f4" /><path d="M8 8L26 6M8 13L27 11M9 18L28 16M10 23L28 21M10 28L29 26" stroke="#bbb" /><path d="M31 2L24 29" stroke="#7a90a8" strokeWidth="2.600" /></S> },
];
const Mini = ({ bg, page, top, tag, tc, tb }: { bg: string; page: React.ReactNode; top: string; tag: string; tc: string; tb: string }) => (
  <S><rect x="0" y="8" width="36" height="24" fill={bg} /><rect x="0" y="8" width="36" height="3" fill={top} />{page}<rect x="23" y="23" width="13" height="13" fill={tb} stroke={tc} strokeWidth=".8" /><text x="29.500" y="33.500" textAnchor="middle" fontFamily="Open Sans, sans-serif" fontSize="9.500" fontWeight="600" fill={tc}>{tag}</text></S>
);

/* ---------- composed parts ---------- */
const CheckBox = ({ on, ml }: { on?: boolean; ml?: number }) => <Check $on={on} $ml={ml}>{on && <Slot $mt={-2}><Tick /></Slot>}</Check>;

const Pop = ({ w = 468, text, ml, h }: { w?: number; text: string; ml?: number; h?: number }) => (
  <Select $w={w} $ml={ml} $h={h}><Txt $s={18.5} $ls={0.05} $up={2}>{text}</Txt><UpDown /></Select>
);
const Header = ({ icon, title, check = true, h, inner = 36 }: { icon: React.ReactNode; title: string; check?: boolean; h?: number; inner?: number }) => (
  <SecHead $h={h}><HeadInner $h={inner}>
    <Fold open />
    <Slot $ml={4} $w={34}>{icon}</Slot>
    <Slot $ml={4} $w={30} $mt={-2}>{check && <CheckBox on />}</Slot>
    <Txt $b $up={0} $ls={0.42}>{title}</Txt>
    <HeadTools><Book /><Presets /><Gear /></HeadTools>
  </HeadInner></SecHead>
);
const DIM = "#6a6a6a";
const AxisField = ({ a, v }: { a: string; v: string }) => (
  <Axis><Txt $w={24} $ml={1} $c={DIM}>{a}</Txt><Field $w={128} $ml={1} $dim><Txt $c={DIM} $ls={0.9}>{v}</Txt></Field></Axis>
);
const hierarchy = [
  { n: "Main Camera", d: 0 }, { n: "Canvas", d: 0, sel: true, f: "open" }, { n: "Image (2)", d: 1 }, { n: "Button", d: 1, f: "closed" },
  { n: "Image", d: 1 }, { n: "Image (1)", d: 1 }, { n: "Text", d: 1 }, { n: "Text (1)", d: 1 }, { n: "EventSystem", d: 0 },
];

const STEP = 71.68;
const Grid = () => {
  const lines: React.ReactNode[] = [];
  for (let i = -4; i <= 27; i++) {
    const x = 317.5 + i * STEP;
    lines.push(<line key={"v" + i} x1={x} x2={x} y1={0} y2={1228} stroke="#808080" strokeOpacity={i % 10 === 0 ? 0.45 : 0.06} strokeWidth={i % 10 === 0 ? 1.2 : 1.4} />);
  }
  for (let i = -3; i <= 14; i++) {
    const y = 1017.5 - i * STEP;
    lines.push(<line key={"h" + i} x1={0} x2={2296} y1={y} y2={y} stroke="#808080" strokeOpacity={i % 10 === 0 ? 0.5 : 0.08} strokeWidth={i % 10 === 0 ? 1.4 : 1.5} />);
  }
  return <GridSvg width="2296" height="1228">{lines}<rect x="310.500" y="1013.500" width="12" height="8" fill="none" stroke="#ddd" /></GridSvg>;
};

const Scene = () => (
  <Panel $w={2298}>
    <TabStrip>
      <Tab $w={138} $on $pl={19}><Hash /><Txt $ml={4}>Scene</Txt></Tab>
      <Tab $w={140} $pl={20}><Pac /><Txt $ml={9} $c="#333">Game</Txt></Tab>
      <Tab $w={192} $pl={17}><Bag /><Txt $ml={6} $c="#333">Asset Store</Txt></Tab>
      <Tab $w={150} $pl={18}><Info /><Txt $ml={8} $c="#333" $ls={0.1}>Inspector</Txt></Tab>
      <StripEnd $r={11}><PaneMenu /></StripEnd>
    </TabStrip>
    <Bar>
      <BarItem $w={241} $last $pl={9}><Txt $s={18.5} $ls={0} $w={213}>Shaded</Txt><Down w={9} h={8} c="#444" /></BarItem>
      <Slot $w={11} />
      <BarItem $w={53} $on $pl={12} $noL><Txt $s={20} $ls={0.2} $b $c="#444">2D</Txt></BarItem>
      <Slot $w={11} />
      <BarItem $w={52} $on $pl={15}><Bulb /></BarItem>
      <BarItem $w={52} $pl={11}><Speaker /></BarItem>
      <BarItem $w={52} $pl={13}><Fx /></BarItem>
      <BarItem $w={22} $pl={4}><Down w={9} h={8} c="#444" /></BarItem>
      <BarItem $w={65} $on $last $pl={9}><EyeOff /><Txt $ml={6} $s={18.5}>0</Txt></BarItem>
      <Push>
        <BarItem $w={52} $pl={12}><Wrench s={26} /></BarItem>
        <BarItem $w={68} $pl={14}><Camera /><Slot $ml={10} $mt={-4}><Down w={9} h={8} c="#444" /></Slot></BarItem>
        <BarItem $w={86} $on $pl={9}><Txt $s={18.5} $ls={0}>Gizmos</Txt></BarItem>
        <BarItem $w={24} $on $last $pl={4}><Down w={9} h={8} c="#444" /></BarItem>
        <Search $w={410} $ml={14}><Mag /><Txt $s={19} $c="#777" $ls={0}>All</Txt></Search>
        <Slot $w={10} />
      </Push>
    </Bar>
    <SceneView>
      <PinkCanvas $x={317} $y={134} $w={1650} $h={884} />
      <SceneLabel $x={336} $y={147} $w={200} $h={52}>Scene 2</SceneLabel>
      <WhiteBox $x={1034} $y={349} $w={215} $h={71}>0</WhiteBox>
      <PressButton $x={859} $y={525} $w={566} $h={101}><span>Press Me</span></PressButton>
      <WhiteBox $x={1034} $y={744} $w={215} $h={72} />
      <Grid />
    </SceneView>
  </Panel>
);

const Hierarchy = () => (
  <Panel $w={756}>
    <TabStrip>
      <Tab $w={174} $on $focus $pl={14}><ListIcon /><Txt $ml={6} $c="#333" $ls={0.2}>Hierarchy</Txt></Tab>
      <StripEnd $r={11}><Lock /><PaneMenu /></StripEnd>
    </TabStrip>
    <Bar $pl={11}>
      <BarItem $w={93} $last $pl={9}><Txt $s={18.5} $ls={0} $w={64}>Create</Txt><Down w={9} h={7} c="#444" /></BarItem>
      <Search $w={615} $ml={26}><Mag /><Txt $s={19} $c="#777" $ls={0}>All</Txt></Search>
    </Bar>
    <HierBody>
      <SceneRow><Fold open /><Slot $ml={9} $w={33}><CubeLogo w={28} h={28} o="#222" i="#f4f4f4" /></Slot><Txt $b $ls={0}>Scene2</Txt><Push><PaneMenu /></Push></SceneRow>
      {hierarchy.map((r, i) => (
        <TreeRow key={r.n} $pl={r.d ? 92 : 64} $mt={i === 0 ? -2 : 0} $bg={r.sel ? "linear-gradient(90deg, #4179c0 32px, #4083dd 32px)" : undefined}>
          <Slot $w={26}>{r.f && <Fold open={r.f === "open"} c={r.sel ? "#27528c" : "#757575"} />}</Slot>
          <Slot $w={34} $mt={2}><GameCube /></Slot>
          <Txt $c={r.sel ? "#fff" : "#000"} $ls={0.3} $up={4}>{r.n}</Txt>
        </TreeRow>
      ))}
    </HierBody>
  </Panel>
);

const Project = () => (
  <Panel $w={3060} $h="852px">
    <TabStrip $h={40}>
      <Tab $w={146} $on $pl={13}><FolderTab /><Txt $ml={8} $c="#333" $ls={0.1}>Project</Txt></Tab>
      <Tab $w={160} $pl={21}><ConsoleIcon /><Txt $ml={8} $c="#333">Console</Txt></Tab>
      <StripEnd $r={11}><Lock /><PaneMenu /></StripEnd>
    </TabStrip>
    <Bar $pl={12}>
      <BarItem $w={94} $last $pl={9}><Txt $s={18.5} $ls={0} $w={65}>Create</Txt><Down w={9} h={7} c="#444" /></BarItem>
      <Push>
        <Search $w={599} $ml={0}><Mag arrow={false} /></Search>
        <Slot $w={20} />
        <BarItem $w={44} $pl={10}><Shapes /></BarItem>
        <BarItem $w={44} $pl={9}><Tag /></BarItem>
        <BarItem $w={46} $last $pl={8}><Star s={24} c="#909090" /></BarItem>
        <Slot $w={8} />
      </Push>
    </Bar>
    <ProjectBody>
      <Folders>
        <TreeRow $pl={8}><Fold open /><Slot $ml={7} $w={35}><Star /></Slot><Txt $b $ls={0.3} $up={4}>Favorites</Txt></TreeRow>
        {["All Materials", "All Models", "All Prefabs"].map(n => <TreeRow key={n} $pl={62}><Slot $w={34}><YellowMag /></Slot><Txt $ls={0.2} $up={4}>{n}</Txt></TreeRow>)}
        <TreeRow $pl={8} $mt={30}><Fold open /><Slot $ml={7} $w={35}><Folder /></Slot><Txt $b $ls={0.3} $up={4}>Assets</Txt></TreeRow>
        <TreeRow $pl={61} $bg="#8f8f8f"><Slot $w={35}><Folder /></Slot><Txt $c="#fff" $up={4}>Scenes</Txt></TreeRow>
        <TreeRow $pl={61}><Slot $w={35}><Folder /></Slot><Txt $up={4}>Scripts</Txt></TreeRow>
        <TreeRow $pl={8}><Fold /><Slot $ml={7} $w={35}><Folder /></Slot><Txt $b $ls={0.3} $up={4}>Packages</Txt></TreeRow>
      </Folders>
      <Assets>
        <Crumbs><Txt $up={2}>Assets</Txt><Slot $ml={13} $w={24}><Chevron /></Slot><Txt $b $ls={0} $up={2}>Scenes</Txt></Crumbs>
        <Thumbs>
          {["Scene1", "Scene2"].map(n => <Thumb key={n}><CubeLogo w={111} h={115} o="#222" i="#fff" grad /><ThumbName><Txt $s={18.5} $ls={0}>{n}</Txt></ThumbName></Thumb>)}
        </Thumbs>
        <ZoomBar><svg width="110" height="20" viewBox="0 0 110 20"><path d="M0 10H110" stroke="#777" strokeWidth="3" /><circle cx="64" cy="10" r="8.500" fill="#e6e6e6" stroke="#777" strokeWidth="2" /></svg></ZoomBar>
      </Assets>
    </ProjectBody>
  </Panel>
);

const LABEL = 267;
const InspectorPanel = () => (
  <Inspector>
    <InspTabs>
      <Tab $w={174} $on $pl={19}><Info /><Txt $ml={8} $c="#333" $ls={0.1}>Inspector</Txt></Tab>
      <StripEnd $r={13}><Lock /><PaneMenu /></StripEnd>
    </InspTabs>
    <ObjHead>
      <BigCube><GameCube s={44} /></BigCube>
      <ObjLines>
        <Line $h={32} $pl={24}><CheckBox on /><Field $w={512} $ml={12}><Txt $ml={-2} $ls={0.5}>Canvas</Txt></Field><CheckBox ml={10} /><Txt $ml={7}>Static</Txt><Slot $ml={12}><Down w={18} h={10} c="#333" /></Slot></Line>
        <Line $h={30} $pl={10} $mt={9}><Txt $w={49}>Tag</Txt><Pop w={292} h={29} text="Untagged" /><Txt $ml={11} $w={68}>Layer</Txt><Pop w={273} h={29} text="UI" /></Line>
      </ObjLines>
    </ObjHead>
    <Section $h={386} $first>
      <Header check={false} inner={33} icon={<RectXf />} title="Rect Transform" />
      <HelpBox><Txt $s={19} $c="#404040" $ls={0.5}>Some values driven by Canvas.</Txt></HelpBox>
      <RectGrid>
        <AnchorBox />
        <FieldGrid>
          <Txt $c={DIM} $ml={3}>Pos X</Txt><Txt $c={DIM} $ml={3}>Pos Y</Txt><Txt $c={DIM} $ml={3}>Pos Z</Txt>
          <Field $w={154} $dim><Txt $c={DIM} $ls={0.9}>1150</Txt></Field><Field $w={154} $dim><Txt $c={DIM} $ls={0.9}>616</Txt></Field><Field $w={154} $dim><Txt $c={DIM}>0</Txt></Field>
          <Txt $c={DIM} $ml={3}>Width</Txt><Txt $c={DIM} $ml={3}>Height</Txt><span />
          <Field $w={154} $dim><Txt $c={DIM} $ls={0.9}>2300</Txt></Field><Field $w={154} $dim><Txt $c={DIM} $ls={0.9}>1232</Txt></Field>
          <Slot $ml={50} $mt={-4}><Group $h={36}><Cell $w={51}><svg width="22" height="20" viewBox="0 0 22 20"><path d="M1 1H21V19H1Z" fill="none" stroke="#111" strokeWidth="2" strokeDasharray="5 3" /></svg></Cell><Cell $w={49}><Txt $s={20} $up={2} $c="#333">R</Txt></Cell></Group></Slot>
        </FieldGrid>
      </RectGrid>
      <Row $pl={7}><Slot $mt={6} $w={24}><Fold /></Slot><Txt>Anchors</Txt></Row>
      <Row $mb={20}><Txt $w={265}>Pivot</Txt><AxisField a="X" v="0.5" /><AxisField a="Y" v="0.5" /></Row>
      <Row><Txt $w={265}>Rotation</Txt><AxisField a="X" v="0" /><AxisField a="Y" v="0" /><AxisField a="Z" v="0" /></Row>
      <Row><Txt $w={265}>Scale</Txt><AxisField a="X" v="1" /><AxisField a="Y" v="1" /><AxisField a="Z" v="1" /></Row>
    </Section>
    <Section $h={228}>
      <Header icon={<CanvasIcon />} title="Canvas" />
      <Row><Txt $w={LABEL}>Render Mode</Txt><Pop text="Screen Space – Overlay" /></Row>
      <Row $pl={60}><Txt $w={240}>Pixel Perfect</Txt><Slot $mt={3}><CheckBox /></Slot></Row>
      <Row $pl={60}><Txt $w={238}>Sort Order</Txt><Field $w={468}><Txt>0</Txt></Field></Row>
      <Row $pl={60}><Txt $w={238}>Target Display</Txt><Pop text="Display 1" /></Row>
      <Row><Txt $w={LABEL} $ls={0.25}>Additional Shader Channe</Txt><Pop text="Nothing" /></Row>
    </Section>
    <Section $h={172}>
      <Header icon={<CanvasIcon scaler />} title="Canvas Scaler (Script)" />
      <Row $mb={20}><Txt $w={LABEL}>UI Scale Mode</Txt><Pop text="Constant Pixel Size" /></Row>
      <Row><Txt $w={LABEL}>Scale Factor</Txt><Field $w={468}><Txt>1</Txt></Field></Row>
      <Row><Txt $w={LABEL} $ls={0.2}>Reference Pixels Per Unit</Txt><Field $w={468}><Txt $ls={0.9}>100</Txt></Field></Row>
    </Section>
    <Section $h={188}>
      <Header h={32} icon={<Slot $ml={3}><RayIcon s={31} /></Slot>} title="Graphic Raycaster (Script)" />
      <Row><Txt $w={LABEL} $c={DIM}>Script</Txt><Field $w={432} $dim><RayIcon s={24} o={0.5} /><Txt $ml={5} $c={DIM} $ls={0.4}>GraphicRaycaster</Txt></Field><Slot $ml={16} $mt={8}><svg width="14" height="14" viewBox="0 0 14 14"><circle cx="7" cy="7" r="6" fill="none" stroke="#666" strokeWidth="1.600" /><circle cx="7" cy="7" r="1.500" fill="#555" /></svg></Slot></Row>
      <Row><Txt $w={LABEL + 2} $ls={0.2}>Ignore Reversed Graphics</Txt><Slot $mt={4}><CheckBox on /></Slot></Row>
      <Row><Txt $w={LABEL}>Blocking Objects</Txt><Pop text="None" /></Row>
      <Row><Txt $w={LABEL}>Blocking Mask</Txt><Pop text="Everything" /></Row>
    </Section>
    <AddRow><AddButton><Txt $s={24} $ls={0.7} $c="#222">Add Component</Txt></AddButton></AddRow>
  </Inspector>
);

export default function App() {
  return (
    <Desktop>
      <Global />
      <MenuBar>
        <Slot $mt={-4}><Apple /></Slot>
        <MenuText $ml={41} $w={109} $bold>Unity</MenuText>
        <MenuText $ml={0} $w={82}>File</MenuText>
        <MenuText $ml={0} $w={87}>Edit</MenuText>
        <MenuText $ml={0} $w={122}>Assets</MenuText>
        <MenuText $ml={0} $w={199}>GameObject</MenuText>
        <MenuText $ml={0} $w={188}>Component</MenuText>
        <MenuText $ml={0} $w={140}>Window</MenuText>
        <MenuText $ml={0} $w={80}>Help</MenuText>
        <MenuRight>
          <CubeLogo w={32} h={32} o="#fff" i="none" />
          <Slot $ml={19}><CC /></Slot>
          <Slot $ml={33}><BT /></Slot>
          <Slot $ml={28}><Wifi /></Slot>
          <MenuText $ml={22} $w={66} $s={24} $ls={-0.6}>85 %</MenuText>
          <Batt />
          <MenuText $ml={36} $w={145}>Mi. 12:58</MenuText>
          <MenuText $ml={0} $w={275}>Jørgen Gøstaffson</MenuText>
          <svg width="30" height="30" viewBox="0 0 30 30"><circle cx="12" cy="12" r="9.500" fill="none" stroke="#fff" strokeWidth="2.600" /><path d="M19 19L28 28" stroke="#fff" strokeWidth="3" /></svg>
          <Slot $ml={34}><Siri /></Slot>
          <Slot $ml={24}><NotifList /></Slot>
        </MenuRight>
      </MenuBar>
      <Window>
        <TitleBar>
          <Lights><Light $c="#ff5f57" $e="#e2463f" /><Light $c="#febc2e" $e="#dfa023" /><Light $c="#28c840" $e="#1eab2e" /></Lights>
          <Title>Unity 2019.1.14f1 Personal - Scene2.unity - Project-01 - PC, Mac & Linux Standalone (Personal) &lt;Metal&gt;</Title>
        </TitleBar>
        <MainBar>
          <BarZone $w={1760}>
            <Group $h={44}>
              <Cell $w={63} $on><Hand /></Cell><Cell $w={64}><Move /></Cell><Cell $w={64}><Rotate /></Cell><Cell $w={64}><Scale /></Cell><Cell $w={64}><RectTool /></Cell><Cell $w={64}><Multi /></Cell><Cell $w={62}><Wrench /></Cell>
            </Group>
            <Group $h={36} $ml={39}>
              <Cell $w={127} $pl={15}><PivotIcon /><Txt $ml={5}>Center</Txt></Cell>
              <Cell $w={125} $pl={22}><LocalIcon /><Txt $ml={4}>Local</Txt></Cell>
            </Group>
          </BarZone>
          <Group $h={44}><Cell $w={63}><PlayIcon /></Cell><Cell $w={64}><PauseIcon /></Cell><Cell $w={62}><StepIcon /></Cell></Group>
          <BarZone $right>
            <PushButton $w={155}><Slot $ml={4}><CollabCheck /></Slot><Txt>Collab</Txt><Down /></PushButton>
            <PushButton $w={64} $strong $center><Cloud /></PushButton>
            <PushButton $w={160}><Txt>Account</Txt><Down /></PushButton>
            <PushButton $w={160} $ml={40}><Txt>Layers</Txt><Down /></PushButton>
            <PushButton $w={160}><Txt>Layout</Txt><Down /></PushButton>
          </BarZone>
        </MainBar>
        <Main>
          <LeftArea>
            <TopRow><Hierarchy /><Scene /></TopRow>
            <Project />
          </LeftArea>
          <InspectorPanel />
        </Main>
        <StatusBar><Bubble /><Txt $ml={5}>Mouse enter</Txt></StatusBar>
      </Window>
      <Wallpaper>
        <Dock>
          {dockApps.map(a => <DockItem key={a.k}>{a.el}{a.on && <Dot />}</DockItem>)}
          <DockSep />
          <DockItem><Mini bg="#f4f4f4" top="#222" page={<path d="M2 14H34M2 18H34M2 22H34M9 11V32M18 11V32M27 11V32" stroke="#ddd" />} tag="X" tc="#e8ffe8" tb="#2f7a3e" /></DockItem>
          <DockItem><Mini bg="#f8faf4" top="#5a6a1a" page={<path d="M2 14H34M2 18H34" stroke="#cfe4bc" strokeWidth="2" />} tag="X" tc="#e8ffe8" tb="#2f7a3e" /></DockItem>
          <DockItem><Mini bg="#4a4a4a" top="#333" page={<rect x="9" y="13" width="15" height="19" fill="#fff" />} tag="Ai" tc="#f29220" tb="#2c1600" /></DockItem>
          <DockItem><Mini bg="#3a3a3a" top="#222" page={<rect x="11" y="15" width="10" height="11" fill="#fff" />} tag="Ps" tc="#6cc4ee" tb="#142634" /></DockItem>
          <DockItem><svg width="30" height="38" viewBox="0 0 30 38"><path d="M2 6L6 35Q15 39 24 35L28 6Z" fill="#70787a" /><path d="M7 10L10 34M15 11V36M23 10L20 34" stroke="#9aa4a6" strokeWidth="2" opacity=".7" /><path d="M2 6L5 1L10 3L15 0L20 3L26 1L28 7Q15 11 2 6Z" fill="#e8e8e8" /><path d="M8 4H11M18 5H21" stroke="#b04040" strokeWidth="2" /></svg></DockItem>
        </Dock>
      </Wallpaper>
    </Desktop>
  );
}
